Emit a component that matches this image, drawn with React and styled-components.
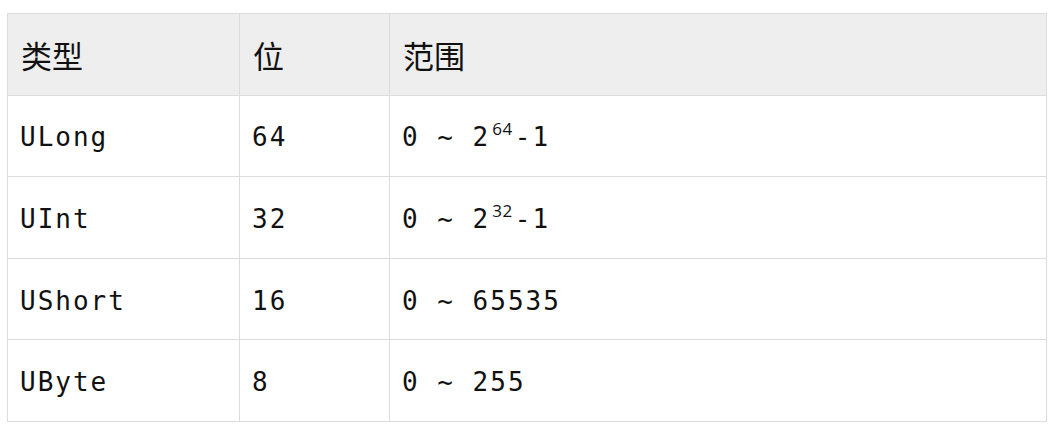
import React from "react";
import styled, { createGlobalStyle } from "styled-components";

const Global = createGlobalStyle`
  html, body { margin: 0; padding: 0; background: #ffffff; }
  body { padding: 13px 7px 0 7px; }
`;

const Table = styled.table`
  width: 1040px;
  border-collapse: collapse;
  table-layout: fixed;
  border: 1px solid #dcdcdc;
  color: #111111;
`;

const Row = styled.tr`
  height: 81.6px;
`;

const HeadCell = styled.th`
  box-sizing: border-box;
  background: #eeeeee;
  border: 1px solid #dcdcdc;
  padding: 0 12px 0 13px;
  text-align: left;
  font-weight: normal;
  font-family: "Noto Sans CJK SC", sans-serif;
  font-size: 31px;
  width: ${(p) => (p.$w ? `${p.$w}px` : "auto")};
`;

const Cell = styled.td`
  border: 1px solid #dcdcdc;
  padding: 3px 12px 0 12px;
  font-family: "DejaVu Sans Mono", monospace;
  font-size: 26px;
  letter-spacing: 2px;
  white-space: pre;
`;

const Sup = styled.sup`
  font-family: "Open Sans", sans-serif;
  font-size: 17px;
  letter-spacing: 0.5px;
  line-height: 0;
  vertical-align: 0;
  position: relative;
  top: -11px;
  padding: 0 2px 0 2px;
`;

const rows = [
  ["ULong", "64", <>0 ~ 2<Sup>64</Sup>-1</>],
  ["UInt", "32", <>0 ~ 2<Sup>32</Sup>-1</>],
  ["UShort", "16", "0 ~ 65535"],
  ["UByte", "8", "0 ~ 255"],
];

export default function App() {
  return (
    <>
      <Global />
      <Table>
        <thead>
          <Row>
            <HeadCell $w={232}>类型</HeadCell>
            <HeadCell $w={150}>位</HeadCell>
            <HeadCell>范围</HeadCell>
          </Row>
        </thead>
        <tbody>
          {rows.map((r) => (
            <Row key={r[0]}>
              <Cell>{r[0]}</Cell>
              <Cell>{r[1]}</Cell>
              <Cell>{r[2]}</Cell>
            </Row>
          ))}
        </tbody>
      </Table>
    </>
  );
}
